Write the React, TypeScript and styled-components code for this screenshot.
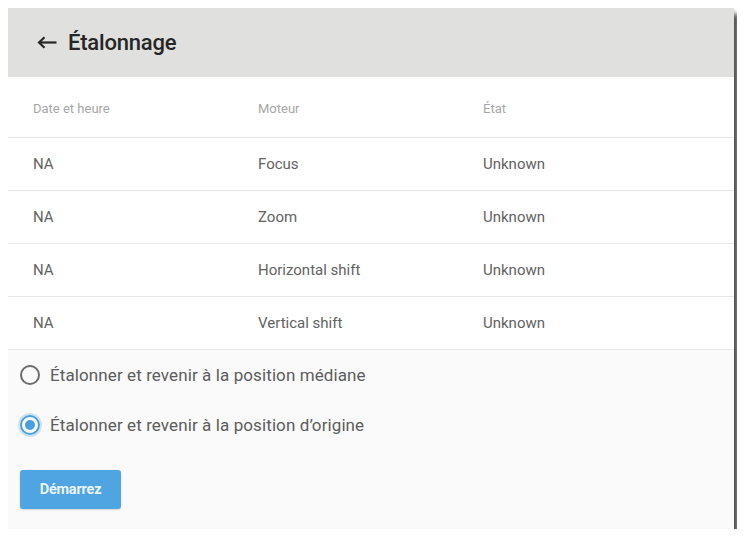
import React, { ReactElement } from 'react';
import styled, { createGlobalStyle } from 'styled-components';

const GlobalStyle = createGlobalStyle`
  body {
    margin: 8px;
    background: #ffffff;
    font-family: Roboto, "Liberation Sans", Arial, sans-serif;
    overflow: hidden;
  }
`;

const Card = styled.div`
  width: 726px;
  height: 521px;
  background: #fafafa;
  box-shadow: 5px 6px 5px rgba(0, 0, 0, 0.68), 0 -1px 4px rgba(0, 0, 0, 0.06);
  display: flex;
  flex-direction: column;
`;

const Header = styled.div`
  height: 69px;
  background: #e0e0de;
  display: flex;
  align-items: center;
  gap: 11px;
  padding-left: 29px;
  flex-shrink: 0;
`;

const Title = styled.h1`
  margin: 0;
  font-size: 22px;
  font-weight: 500;
  color: #262626;
  letter-spacing: -0.2px;
`;

const Table = styled.div`
  background: #ffffff;
`;

const Row = styled.div<{ head?: boolean }>`
  display: grid;
  grid-template-columns: 225px 225px 1fr;
  align-items: center;
  height: ${(p) => (p.head ? '58px' : '52px')};
  padding-left: 25px;
  padding-top: ${(p) => (p.head ? '2px' : '0')};
  border-bottom: 1px solid #e8e8e8;
  font-size: ${(p) => (p.head ? '13px' : '15px')};
  color: ${(p) => (p.head ? '#a6a6a6' : '#626262')};
`;

const Options = styled.div`
  display: flex;
  flex-direction: column;
  padding-left: 12px;
`;

const Option = styled.label`
  display: flex;
  align-items: center;
  gap: 10px;
  height: 50px;
  font-size: 17px;
  letter-spacing: 0.1px;
  color: #5c5c5c;
  cursor: pointer;
`;

const Radio = styled.span<{ checked?: boolean }>`
  width: 16px;
  height: 16px;
  border-radius: 50%;
  border: 2px solid ${(p) => (p.checked ? '#4a9fdc' : '#6c6c6c')};
  display: flex;
  align-items: center;
  justify-content: center;
  box-shadow: ${(p) => (p.checked ? '0 0 0 2px rgba(74, 159, 220, 0.25)' : 'none')};
  &::after {
    content: '';
    width: 10px;
    height: 10px;
    border-radius: 50%;
    background: ${(p) => (p.checked ? '#4a9fdc' : 'transparent')};
  }
`;

const Actions = styled.div`
  padding: 20px 0 0 12px;
`;

const StartButton = styled.button`
  width: 101px;
  height: 39px;
  border: none;
  border-radius: 3px;
  background: #4fa4e2;
  color: #eaf5ff;
  font-family: Roboto, "Liberation Sans", Arial, sans-serif;
  font-size: 14.5px;
  font-weight: 700;
  letter-spacing: -0.2px;
  box-shadow: 0 1px 2px rgba(0, 0, 0, 0.15);
  cursor: pointer;
`;

function BackArrow(): ReactElement {
  return (
    <svg width="20" height="13" viewBox="0 0 20 13" fill="none">
      <path d="M19.5 6.5H2" stroke="#262626" strokeWidth="2.2" />
      <path d="M7.5 1.2L2 6.5L7.5 11.8" stroke="#262626" strokeWidth="2.2" />
    </svg>
  );
}

const rows = [
  { motor: 'Focus' },
  { motor: 'Zoom' },
  { motor: 'Horizontal shift' },
  { motor: 'Vertical shift' },
];

export default function App(): ReactElement {
  return (
    <>
      <GlobalStyle />
      <Card>
        <Header>
          <BackArrow />
          <Title>Étalonnage</Title>
        </Header>
        <Table>
          <Row head>
            <span>Date et heure</span>
            <span>Moteur</span>
            <span>État</span>
          </Row>
          {rows.map((r) => (
            <Row key={r.motor}>
              <span>NA</span>
              <span>{r.motor}</span>
              <span>Unknown</span>
            </Row>
          ))}
        </Table>
        <Options>
          <Option>
            <Radio />
            Étalonner et revenir à la position médiane
          </Option>
          <Option>
            <Radio checked />
            Étalonner et revenir à la position d’origine
          </Option>
        </Options>
        <Actions>
          <StartButton>Démarrez</StartButton>
        </Actions>
      </Card>
    </>
  );
}
